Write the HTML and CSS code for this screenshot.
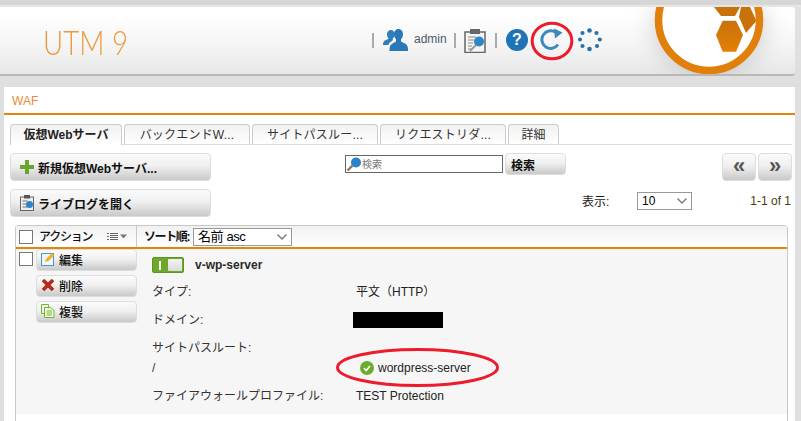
FILE: index.html
```html
<!DOCTYPE html>
<html lang="ja">
<head>
<meta charset="utf-8">
<title>UTM 9 WAF</title>
<link rel="stylesheet" href="styles.css">
</head>
<body>
<header class="masthead">
  <div class="brand"><span class="brand-text">UTM 9</span></div>
  <div class="toolbar">
    <span class="sep sep-a"></span>
    <svg class="ic-user" width="25" height="24" viewBox="0 0 25 24"><path fill="#2f7fbf" d="M8 2c2.200 0 3.500 1.900 3.500 4.200 0 1.900-.8 3.400-1.700 4.300v1.700c-2 1.200-3.800 2.400-4.300 4.800H0c0-3 1-4.200 3.500-5.200l2-1V10.300C4.600 9.400 4 8 4 6.200 4 3.900 5.800 2 8 2z"/><path fill="#2a78b8" d="M15.500 1c2.800 0 4.500 2.300 4.500 5.200 0 2.200-.8 3.900-2 5v2.300l3.500 1.700c2.300 1.100 3.500 2.800 3.500 6.300v1.500H6.500v-1.500c0-3.500 1.200-5.200 3.500-6.300l3-1.700v-2.300c-1.200-1.100-2-2.800-2-5C11 3.300 12.700 1 15.500 1z"/></svg>
    <span class="user-name">admin</span>
    <span class="sep sep-b"></span>
    <svg class="ic-clip" width="22" height="24" viewBox="0 0 22 24"><rect x="1" y="3" width="20" height="20.500" fill="#f4f4f4" stroke="#666" stroke-width="1.500"/><rect x="6" y="0" width="10" height="5" fill="#666"/><path d="M4 8h8M4 11h6M4 14h5M4 17h4M4 20h4" stroke="#888" stroke-width="1"/><path d="M6 22l6-6" stroke="#999" stroke-width="2"/><circle cx="15" cy="12.500" r="5" fill="#2d86c6"/></svg>
    <span class="sep sep-c"></span>
    <span class="help">?</span>
    <svg class="ic-reload" width="23" height="23" viewBox="0 0 23 23"><path d="M18 16.500A8.800 8.800 0 1 1 15.500 4.200" fill="none" stroke="#3d88bd" stroke-width="3"/><path d="M14 .5l8.500 4-7.500 6z" fill="#3d88bd"/></svg>
    <svg class="ic-spin" width="24" height="24" viewBox="0 0 24 24" fill="#2a70a8"><circle cx="11.500" cy="2.500" r="2.300"/><circle cx="18.500" cy="5" r="2.100"/><circle cx="21.800" cy="11.500" r="2.100"/><circle cx="19" cy="18" r="2.100"/><circle cx="11.500" cy="21" r="2.300"/><circle cx="4.500" cy="18" r="2.100"/><circle cx="2" cy="11.500" r="2"/><circle cx="4.500" cy="5" r="2.100"/></svg>
  </div>
  <svg class="logo" width="120" height="69" viewBox="650 7 120 69">
    <defs><linearGradient id="hexfill" x1="0" y1="0" x2="0" y2="1"><stop offset="0" stop-color="#c9720c"/><stop offset="1" stop-color="#e57f05"/></linearGradient></defs>
    <circle cx="709" cy="20" r="50.500" fill="#fff" stroke="#e07f0a" stroke-width="7.500"/>
    <path fill="url(#hexfill)" d="M716 35l6.700-14.300H736l7 14.300-7 16.700h-13.300z"/>
    <path fill="#c9720c" d="M714 7l7 9h14l5-9z"/>
    <path fill="#c9720c" d="M741 7h9l6 13-.500 2-9.500 11-7-16z"/>
  </svg>
</header>

<main class="panel">
  <h1 class="panel-title">WAF</h1>
  <nav class="tabs">
    <span class="tab tab-active">仮想Webサーバ</span>
    <span class="tab tab-wide">バックエンドW...</span>
    <span class="tab tab-wide">サイトパスルー...</span>
    <span class="tab tab-wide">リクエストリダ...</span>
    <span class="tab tab-small">詳細</span>
  </nav>

  <div class="controls">
    <div class="controls-left">
      <button class="btn btn-main" type="button">
        <svg width="14" height="14" viewBox="0 0 14 14"><path fill="#6aa32d" d="M5 0h4v5h5v4H9v5H5V9H0V5h5z"/></svg>新規仮想Webサーバ...
      </button>
      <button class="btn btn-main" type="button">
        <svg width="14" height="16" viewBox="0 0 14 16"><rect x=".5" y="2" width="13" height="13.500" fill="#eee" stroke="#666"/><rect x="4" y="0" width="6" height="3.500" fill="#555"/><path d="M2.500 6h5M2.500 9h4M2.500 12h5" stroke="#777"/><circle cx="9.500" cy="9.500" r="3.500" fill="#2d86c6"/></svg>ライブログを開く
      </button>
    </div>
    <div class="search">
      <label class="search-box">
        <svg width="16" height="15" viewBox="0 0 16 15"><path d="M1.500 13.500l5-5" stroke="#8a7a55" stroke-width="2.400"/><circle cx="10" cy="5.500" r="5" fill="#2a82c8"/></svg>
        <input class="search-input" type="text" placeholder="検索">
      </label>
      <button class="btn btn-search" type="button">検索</button>
    </div>
    <div class="controls-right">
      <div class="pager">
        <button class="btn btn-page" type="button">«</button>
        <button class="btn btn-page" type="button">»</button>
      </div>
      <div class="paging-info">
        <span class="show-label">表示:</span>
        <select class="show-select"><option>10</option></select>
        <span class="count">1-1 of 1</span>
      </div>
    </div>
  </div>

  <section class="list">
    <div class="list-head">
      <div class="head-action">
        <span class="check"></span>
        <span class="head-action-label">アクション</span>
        <svg width="20" height="8" viewBox="0 0 20 8"><path d="M0 .5h2M0 3.500h2M0 6.500h2M3 .5h8M3 2.500h8M3 4.500h8M3 6.500h8" stroke="#666"/><path d="M13 1.500h7l-3.500 4z" fill="#777"/></svg>
      </div>
      <div class="head-sort">
        <span class="sort-label">ソート順:</span>
        <select class="sort-select"><option>名前 asc</option></select>
      </div>
    </div>
    <div class="row">
      <span class="check check-row"></span>
      <div class="row-actions">
        <button class="btn btn-act" type="button">
          <svg width="14" height="14" viewBox="0 0 14 14"><rect x=".5" y="1.500" width="12" height="12" fill="#eef6fc" stroke="#4a98c8"/><path d="M4 10l1-3 6-6 2.500 2-6 6z" fill="#eeb020"/></svg>編集
        </button>
        <button class="btn btn-act" type="button">
          <svg width="14" height="14" viewBox="0 0 14 14"><path d="M2 2l10 10M12 2L2 12" stroke="#b8281a" stroke-width="3.600"/></svg>削除
        </button>
        <button class="btn btn-act" type="button">
          <svg width="14" height="14" viewBox="0 0 14 14"><path d="M.5.5h7v3M.5.5v9h3" fill="none" stroke="#72b52a"/><path d="M3.500 3.500h6l3.500 3v7H3.500z" fill="#f6fbee" stroke="#72b52a"/><path d="M5.500 7h5.500M5.500 9h5.500M5.500 11h5.500" stroke="#72b52a"/></svg>複製
        </button>
      </div>
      <div class="row-body">
        <div class="row-title">
          <span class="toggle"><span class="toggle-bar"></span><span class="toggle-knob"></span></span>
          <strong class="server-name">v-wp-server</strong>
        </div>
        <dl class="fields">
          <dt class="f-type">タイプ:</dt><dd class="f-type">平文（HTTP）</dd>
          <dt class="f-domain">ドメイン:</dt><dd class="f-domain"><span class="redacted"></span></dd>
          <dt class="f-site">サイトパスルート:</dt><dd class="f-site"></dd>
          <dt class="f-root">/</dt>
          <dd class="f-root">
            <svg width="14" height="14" viewBox="0 0 14 14"><circle cx="7" cy="7" r="7" fill="#6cac2c"/><path d="M4 7.300l2.200 2.200L10 5" fill="none" stroke="#fff" stroke-width="1.600"/></svg>
            wordpress-server
          </dd>
          <dt class="f-prof">ファイアウォールプロファイル:</dt><dd class="f-prof">TEST Protection</dd>
        </dl>
      </div>
    </div>
  </section>
</main>

<svg class="mark mark-reload" width="44" height="40" viewBox="0 0 44 40"><ellipse cx="22" cy="20" rx="19.800" ry="17.800" fill="none" stroke="#ec1c2e" stroke-width="3"/></svg>
<svg class="mark mark-server" width="165" height="41" viewBox="0 0 165 41"><ellipse cx="82.500" cy="20.500" rx="80" ry="18" fill="none" stroke="#ec1c2e" stroke-width="3"/></svg>
</body>
</html>
```
FILE: styles.css
```css
* { box-sizing: border-box; }
html, body { margin: 0; height: 421px; overflow: hidden; }
body {
  position: relative;
  padding: 7px 6px 0 4px;
  background: linear-gradient(#d6d6d6 5px, #e8e8e8 5px, #e2e2e2 7px, #dfdfdf 76px);
  font: 12px/14px "Liberation Sans", "Noto Sans CJK JP", sans-serif;
  color: #222;
}
button, select, input { font-family: inherit; }

.masthead {
  position: relative;
  display: flex;
  align-items: flex-start;
  height: 69px;
  margin-left: -4px;
  overflow: hidden;
  background: linear-gradient(#fff 10%, #f4f4f4 60%, #e6e7e7 100%);
  border-bottom: 2px solid #b8b8b8;
  border-radius: 0 3px 3px 0;
}
.brand {
  margin: 17px 0 0 43px;
  width: 329px;
  font: 300 33px/36px Lato, sans-serif;
  color: #ec9a40;
}
.brand-text { display: inline-block; transform: scaleX(.84); transform-origin: left center; white-space: nowrap; }
.toolbar { display: flex; align-items: flex-start; padding-top: 21px; }
.sep { width: 2px; height: 15px; margin-top: 5px; background: #aaa; }
.ic-user { margin: 0 0 0 9px; }
.user-name { margin: 4px 0 0 6px; width: 40px; font-size: 12px; color: #4a5a68; }
.sep-b { margin-right: 8px; }
.ic-clip { margin-top: 1px; }
.sep-c { margin-left: 9px; }
.help {
  width: 22px; height: 22px; margin: 1px 0 0 9px;
  border-radius: 50%;
  background: #1f74b8;
  color: #fff;
  font: 700 16px/22px "Liberation Sans", sans-serif;
  text-align: center;
}
.ic-reload { margin: 0 0 0 12px; }
.ic-spin { margin: 0 0 0 15px; }
.logo { position: absolute; left: 650px; top: 0; filter: drop-shadow(0 0 12px rgba(0,0,0,.18)); }

.panel {
  height: 334px;
  margin-top: 11px;
  background: #fff;
  padding: 0 3px 0 6px;
}
.panel-title {
  margin: 0 -3px 0 -6px;
  height: 28px;
  padding: 7px 0 0 8px;
  font: 400 12px/14px "Liberation Sans", sans-serif;
  color: #ea8a3a;
  border-bottom: 2px solid #e5830b;
}
.tabs {
  display: flex;
  gap: 2px;
  height: 21px;
  margin-top: 9px;
  border-bottom: 1px solid #ddd;
}
.tab {
  height: 20px;
  padding: 2px 0 0;
  text-align: center;
  font-size: 12px;
  line-height: 16px;
  color: #333;
  background: linear-gradient(#f1f1f1, #fff);
  border: 1px solid #ccc;
  border-bottom: 0;
  border-radius: 4px 4px 0 0;
}
.tab-active { width: 112px; height: 21px; font-weight: 700; color: #222; }
.tab-wide { width: 126px; letter-spacing: .2px; }
.tab-small { width: 51px; }

.btn {
  display: flex;
  align-items: center;
  margin: 0;
  padding: 0;
  border: 1px solid #ddd;
  border-radius: 4px;
  background: linear-gradient(#fbfbfb, #f0f0f0 45%, #c9c9c9);
  color: #111;
  font-weight: 700;
  font-size: 12px;
}
.controls { display: flex; height: 72px; margin-top: 8px; }
.controls-left { display: flex; flex-direction: column; gap: 8px; width: 335px; }
.btn-main { width: 201px; height: 28px; padding-left: 9px; gap: 4px; }
.search { display: flex; gap: 2px; width: 377px; align-items: flex-start; }
.search-box {
  display: flex; align-items: center;
  width: 158px; height: 18px; margin-top: 2px;
  border: 1px solid #666;
  background: #fff;
}
.search-input { width: 130px; height: 14px; padding: 0; border: 0; outline: 0; font-size: 10px; background: none; }
.search-input::placeholder { color: #777; }
.btn-search { width: 61px; height: 22px; padding-left: 5px; }
.controls-right { width: 70px; }
.pager { display: flex; gap: 2px; }
.btn-page { width: 34px; height: 28px; justify-content: center; font-size: 22px; font-weight: 700; color: #555; padding-bottom: 3px; }
.paging-info {
  display: grid;
  grid-template-columns: 55px 55px 99px;
  margin: 11px 0 0 -140px;
  width: 209px;
  align-items: center;
}
.show-label { padding-top: 2px; }
.show-select, .sort-select {
  appearance: none;
  height: 18px;
  border: 1px solid #999;
  background: #fff url("data:image/svg+xml,%3Csvg xmlns='http://www.w3.org/2000/svg' width='12' height='8'%3E%3Cpath d='M1.500 1.500l4.500 4.500 4.500-4.500' fill='none' stroke='%23777' stroke-width='1.400'/%3E%3C/svg%3E") no-repeat right 3px center;
}
.show-select { width: 55px; font-size: 12px; padding: 0 0 0 4px; }
.count { text-align: right; color: #4a3c08; }

.list {
  width: 773px;
  height: 196px;
  margin: 0 0 0 5px;
  border: solid #c8c8c8;
  border-width: 1px 1px 0;
  border-radius: 4px 4px 0 0;
}
.list-head {
  display: flex;
  height: 23px;
  border-bottom: 2px solid #e5830b;
  background: linear-gradient(#f1f1f1, #fff);
}
.head-action { display: flex; align-items: center; width: 121px; border-right: 1px solid #c8c8c8; padding-left: 3px; }
.check { display: block; flex: none; width: 14px; height: 14px; border: 1px solid #777; background: #fff; }
.head-action-label { width: 68px; margin-left: 6px; font-weight: 500; color: #111; letter-spacing: -1.200px; }
.head-sort { display: flex; align-items: center; padding-left: 7px; }
.sort-label { width: 49px; flex: none; white-space: nowrap; font-weight: 700; color: #111; letter-spacing: -1.400px; }
.sort-select { width: 99px; font-size: 13px; letter-spacing: -.4px; padding: 0 0 0 4px; }
.row { display: flex; height: 165px; background: #f6f6f6; }
.check-row { margin: 3px 0 0 3px; }
.row-actions { display: flex; flex-direction: column; gap: 4px; width: 101px; margin-left: 3px; flex: none; }
.btn-act { height: 22px; padding: 0 0 2px 4px; gap: 4px; font-weight: 500; }
.row-body { margin-left: 15px; flex: 1; }
.row-title { display: flex; align-items: center; gap: 11px; margin-top: 8px; height: 16px; }
.toggle {
  display: flex; align-items: center; width: 32px; height: 16px;
  padding: 1px;
  background: #6ea82a;
  border: 1px solid #5e9520;
  border-radius: 2px;
}
.toggle-bar { width: 2px; height: 9px; margin: 0 7px 0 5px; background: #fff; }
.toggle-knob { width: 14px; height: 12px; background: linear-gradient(#f2f2f2, #dcdcdc); border-radius: 1px; }
.server-name { font-size: 12px; color: #2a2a2a; }
.fields {
  display: grid;
  grid-template-columns: 204px 1fr;
  grid-template-rows: 28px 28px 28px 20px 28px;
  margin: 5px 0 0;
  color: #333;
  align-items: center;
}
.fields dt, .fields dd { margin: 0; font-weight: 400; }
.fields dd { color: #222; }
.f-domain { display: flex; }
.redacted { display: block; width: 90px; height: 16px; margin-left: -3px; background: #000; }
.f-root { display: flex; align-items: center; align-self: start; margin-top: -1px; }
.fields dt.f-root, .fields dd.f-root { margin-top: -1px; }
dd.f-root { padding-left: 4px; gap: 4px; }

.mark { position: absolute; pointer-events: none; }
.mark-reload { left: 530px; top: 21px; }
.mark-server { left: 335px; top: 347px; }
```
